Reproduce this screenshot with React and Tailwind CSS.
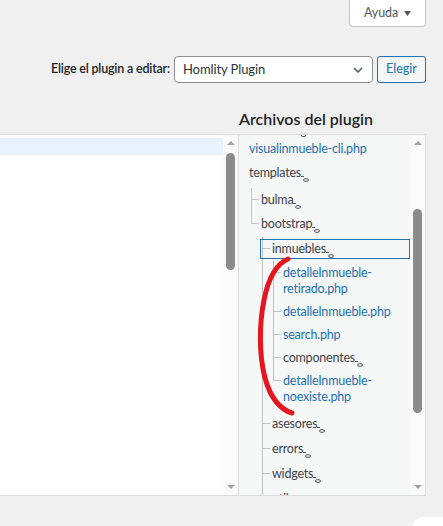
const LINE = "border-[#c3c4c7]";

function Oval() {
  return (
    <span className="relative inline-block w-[8px]">
      <svg className="absolute left-0 top-[-1px]" width="8" height="7" viewBox="0 0 8 7">
        <line x1="0" y1="0.5" x2="3" y2="0.5" stroke="#50575e" strokeWidth="1" />
        <ellipse cx="5" cy="4" rx="2.5" ry="1.4" fill="none" stroke="#50575e" strokeWidth="1" />
      </svg>
    </span>
  );
}

function Label({ dir, pad = "py-[4px]", children }) {
  return (
    <div
      className={`${pad} text-[12.5px] leading-[16px] tracking-[-0.2px] ${dir ? "text-[#3c434a]" : "text-[#2271b1]"}`}
    >
      {children}
      {dir && <Oval />}
    </div>
  );
}

function Branch({ last, focus, stub = "h-[12px]", children }) {
  return (
    <li className="relative flex">
      {focus && <div className="absolute left-[-2px] right-0 top-[2px] h-[20px] border border-[#2271b1]" />}
      <div className="flex w-[8px] shrink-0 flex-col">
        <div className={`${stub} border-b border-l ${LINE}`} />
        {!last && <div className={`flex-1 border-l ${LINE}`} />}
      </div>
      <div className="ml-[2px] min-w-0 flex-1">{children}</div>
    </li>
  );
}

function Scrollbar({ thumb }) {
  return (
    <div className="flex w-[15px] shrink-0 flex-col items-center bg-[#fafafa]">
      <svg className="mt-[6px]" width="8" height="4" viewBox="0 0 8 4">
        <path d="M0 4 L4 0 L8 4 Z" fill="#a3a3a3" />
      </svg>
      <div className={`w-[9px] rounded-full bg-[#8b8b8b] ${thumb}`} />
      <div className="flex-1" />
      <svg className="mb-[6px]" width="8" height="4" viewBox="0 0 8 4">
        <path d="M0 0 L4 4 L8 0 Z" fill="#a3a3a3" />
      </svg>
    </div>
  );
}

export default function App() {
  return (
    <div className="relative h-[526px] w-[443px] overflow-hidden bg-[#f0f0f1] font-['Lato',sans-serif] text-[#1d2327]">
      {/* Ayuda tab */}
      <div className="flex justify-end pr-[17px]">
        <button className="flex h-[27px] w-[77px] items-center justify-center gap-[6px] rounded-b-[4px] border border-t-0 border-[#c3c4c7] bg-white text-[12.5px] tracking-[-0.1px] text-[#50575e]">
          Ayuda
          <svg width="7" height="5" viewBox="0 0 7 5">
            <path d="M0 0 L7 0 L3.5 5 Z" fill="#50575e" />
          </svg>
        </button>
      </div>

      {/* plugin picker */}
      <div className="mt-[29px] flex h-[27px] items-center justify-end gap-[4px] pr-[17px]">
        <span className="text-[12.5px] font-semibold tracking-[-0.2px] text-[#1d2327]">Elige el plugin a editar:</span>
        <div className="flex h-[27px] w-[199px] items-center justify-between rounded-[4px] border border-[#8c8f94] bg-white pl-[8px] pr-[9px] text-[13px] tracking-[-0.1px] text-[#2c3338]">
          Homlity Plugin
          <svg width="10" height="6" viewBox="0 0 10 6">
            <path d="M1 1 L5 5 L9 1" fill="none" stroke="#50575e" strokeWidth="1.5" />
          </svg>
        </div>
        <button className="h-[27px] w-[49px] rounded-[3px] border border-[#2271b1] bg-[#f6f7f7] text-[12.5px] text-[#2271b1]">
          Elegir
        </button>
      </div>

      <div className="mt-[25px] flex">
        <div className="w-[238px]" />
        <h2 className="h-[22px] pl-[1px] text-[16px] font-semibold leading-[22px] text-[#1d2327]">Archivos del plugin</h2>
      </div>

      <div className="mt-[4px] flex">
        {/* editor */}
        <div className="flex h-[362px] w-[238px] border-y border-[#dcdcde] bg-white">
          <div className="flex-1 pt-[3px]">
            <div className="h-[17px] bg-[#e8f2ff]" />
          </div>
          <Scrollbar thumb="mt-[8px] h-[117px]" />
        </div>

        {/* file tree */}
        <div className="flex h-[362px] w-[188px] border border-[#dcdcde] bg-[#f6f7f7]">
          <div className="min-w-0 flex-1 overflow-hidden pl-[10px]">
            <div className="h-[2px] pl-[52px]">
              <div className="h-[2px] w-[5px] rounded-b-full border-x border-b border-[#50575e]" />
            </div>
            <ul>
              <li>
                <Label>visualinmueble-cli.php</Label>
              </li>
              <li>
                <Label dir>templates</Label>
                <ul className="ml-[2px] pt-[3px]">
                  <Branch>
                    <Label dir>bulma</Label>
                  </Branch>
                  <Branch last>
                    <Label dir>bootstrap</Label>
                    <ul className="ml-[1px] pt-px">
                      <Branch focus>
                        <Label dir>inmuebles</Label>
                        <ul className="ml-[1px] pb-[3px]">
                          <Branch>
                            <Label pad="py-[3.6px]">
                              detalleInmueble-
                              <br />
                              retirado.php
                            </Label>
                          </Branch>
                          <Branch stub="h-[11.6px]">
                            <Label pad="py-[3.6px]">detalleInmueble.php</Label>
                          </Branch>
                          <Branch stub="h-[11.6px]">
                            <Label pad="py-[3.6px]">search.php</Label>
                          </Branch>
                          <Branch stub="h-[11.6px]">
                            <Label dir pad="py-[3.6px]">
                              componentes
                            </Label>
                          </Branch>
                          <Branch last stub="h-[11.6px]">
                            <Label pad="py-[3.6px]">
                              detalleInmueble-
                              <br />
                              noexiste.php
                            </Label>
                          </Branch>
                        </ul>
                      </Branch>
                      <Branch stub="h-[12.5px]">
                        <Label dir pad="py-[4.5px]">
                          asesores
                        </Label>
                      </Branch>
                      <Branch stub="h-[12.5px]">
                        <Label dir pad="py-[4.5px]">
                          errors
                        </Label>
                      </Branch>
                      <Branch stub="h-[12.5px]">
                        <Label dir pad="py-[4.5px]">
                          widgets
                        </Label>
                      </Branch>
                      <Branch stub="h-[12.5px]">
                        <Label dir pad="py-[4.5px]">
                          utils
                        </Label>
                      </Branch>
                    </ul>
                  </Branch>
                </ul>
              </li>
            </ul>
          </div>
          <Scrollbar thumb="mt-[64px] h-[204px]" />
        </div>
      </div>

      {/* hand-drawn marker */}
      <svg className="pointer-events-none absolute inset-0" width="443" height="526" viewBox="0 0 443 526">
        <path
          d="M288 259 C276 264 268 280 264 300 C259 325 259 355 265 378 C270 396 279 409 292 413"
          fill="none"
          stroke="#e5161d"
          strokeWidth="5"
          strokeLinecap="round"
        />
      </svg>

      <div className="absolute left-[412px] top-[517px] h-[30px] w-[40px] rounded-[12px] bg-white" />
    </div>
  );
}
